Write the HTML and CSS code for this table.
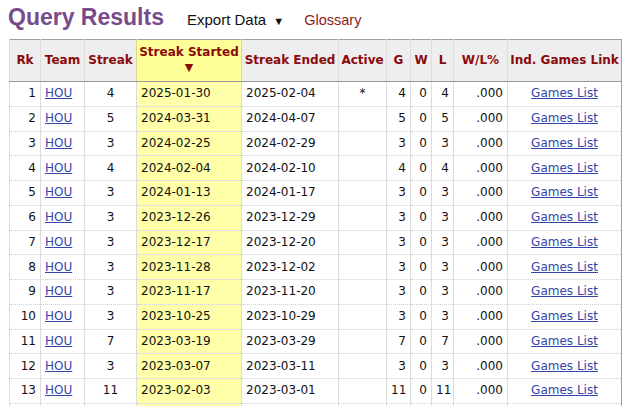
FILE: index.html
```html
<!DOCTYPE html>
<html>
<head>
<meta charset="utf-8">
<link rel="stylesheet" href="styles.css">
</head>
<body>
<div class="topbar">
  <h1 class="title">Query Results</h1>
  <span class="export">Export Data <span class="tri">▼</span></span>
  <a class="glossary">Glossary</a>
</div>
<table class="results">
  <colgroup>
    <col class="c-rk"><col class="c-team"><col class="c-streak"><col class="c-start"><col class="c-end"><col class="c-active"><col class="c-g"><col class="c-w"><col class="c-l"><col class="c-pct"><col class="c-link">
  </colgroup>
  <thead>
    <tr>
      <th>Rk</th><th>Team</th><th>Streak</th><th class="sorted">Streak Started<br><span class="arrow">▼</span></th><th>Streak Ended</th><th>Active</th><th>G</th><th>W</th><th>L</th><th>W/L%</th><th>Ind. Games Link</th>
    </tr>
  </thead>
  <tbody>
    <tr><td class="r">1</td><td><a>HOU</a></td><td class="c">4</td><td class="hl">2025-01-30</td><td>2025-02-04</td><td class="c">*</td><td class="r">4</td><td class="r">0</td><td class="r">4</td><td class="r">.000</td><td class="c"><a>Games List</a></td></tr>
    <tr><td class="r">2</td><td><a>HOU</a></td><td class="c">5</td><td class="hl">2024-03-31</td><td>2024-04-07</td><td class="c"></td><td class="r">5</td><td class="r">0</td><td class="r">5</td><td class="r">.000</td><td class="c"><a>Games List</a></td></tr>
    <tr><td class="r">3</td><td><a>HOU</a></td><td class="c">3</td><td class="hl">2024-02-25</td><td>2024-02-29</td><td class="c"></td><td class="r">3</td><td class="r">0</td><td class="r">3</td><td class="r">.000</td><td class="c"><a>Games List</a></td></tr>
    <tr><td class="r">4</td><td><a>HOU</a></td><td class="c">4</td><td class="hl">2024-02-04</td><td>2024-02-10</td><td class="c"></td><td class="r">4</td><td class="r">0</td><td class="r">4</td><td class="r">.000</td><td class="c"><a>Games List</a></td></tr>
    <tr><td class="r">5</td><td><a>HOU</a></td><td class="c">3</td><td class="hl">2024-01-13</td><td>2024-01-17</td><td class="c"></td><td class="r">3</td><td class="r">0</td><td class="r">3</td><td class="r">.000</td><td class="c"><a>Games List</a></td></tr>
    <tr><td class="r">6</td><td><a>HOU</a></td><td class="c">3</td><td class="hl">2023-12-26</td><td>2023-12-29</td><td class="c"></td><td class="r">3</td><td class="r">0</td><td class="r">3</td><td class="r">.000</td><td class="c"><a>Games List</a></td></tr>
    <tr><td class="r">7</td><td><a>HOU</a></td><td class="c">3</td><td class="hl">2023-12-17</td><td>2023-12-20</td><td class="c"></td><td class="r">3</td><td class="r">0</td><td class="r">3</td><td class="r">.000</td><td class="c"><a>Games List</a></td></tr>
    <tr><td class="r">8</td><td><a>HOU</a></td><td class="c">3</td><td class="hl">2023-11-28</td><td>2023-12-02</td><td class="c"></td><td class="r">3</td><td class="r">0</td><td class="r">3</td><td class="r">.000</td><td class="c"><a>Games List</a></td></tr>
    <tr><td class="r">9</td><td><a>HOU</a></td><td class="c">3</td><td class="hl">2023-11-17</td><td>2023-11-20</td><td class="c"></td><td class="r">3</td><td class="r">0</td><td class="r">3</td><td class="r">.000</td><td class="c"><a>Games List</a></td></tr>
    <tr><td class="r">10</td><td><a>HOU</a></td><td class="c">3</td><td class="hl">2023-10-25</td><td>2023-10-29</td><td class="c"></td><td class="r">3</td><td class="r">0</td><td class="r">3</td><td class="r">.000</td><td class="c"><a>Games List</a></td></tr>
    <tr><td class="r">11</td><td><a>HOU</a></td><td class="c">7</td><td class="hl">2023-03-19</td><td>2023-03-29</td><td class="c"></td><td class="r">7</td><td class="r">0</td><td class="r">7</td><td class="r">.000</td><td class="c"><a>Games List</a></td></tr>
    <tr><td class="r">12</td><td><a>HOU</a></td><td class="c">3</td><td class="hl">2023-03-07</td><td>2023-03-11</td><td class="c"></td><td class="r">3</td><td class="r">0</td><td class="r">3</td><td class="r">.000</td><td class="c"><a>Games List</a></td></tr>
    <tr><td class="r">13</td><td><a>HOU</a></td><td class="c">11</td><td class="hl">2023-02-03</td><td>2023-03-01</td><td class="c"></td><td class="r">11</td><td class="r">0</td><td class="r">11</td><td class="r">.000</td><td class="c"><a>Games List</a></td></tr>
    <tr class="spacer"><td></td><td></td><td></td><td class="hl"></td><td></td><td></td><td></td><td></td><td></td><td></td><td></td></tr>
  </tbody>
</table>
</body>
</html>
```

FILE: styles.css
```css
html, body {
  margin: 0;
  padding: 0;
  background: #fff;
}
body {
  padding: 0 0 0 8px;
  font-family: "DejaVu Sans", Verdana, sans-serif;
  overflow: hidden;
}
.topbar {
  display: flex;
  align-items: baseline;
  height: 39px;
  padding-top: 2px;
  box-sizing: border-box;
}
.title {
  margin: 0;
  font-family: "Liberation Sans", Arial, sans-serif;
  font-weight: bold;
  font-size: 23px;
  color: #774b8c;
  line-height: 30px;
}
.export {
  margin-left: 23px;
  font-family: "Liberation Sans", Arial, sans-serif;
  font-size: 15px;
  color: #111;
}
.export .tri {
  font-size: 11px;
  margin-left: 3px;
}
.glossary {
  margin-left: 20px;
  font-family: "Liberation Sans", Arial, sans-serif;
  font-size: 14.5px;
  color: #8a1c1c;
}
.results {
  margin-left: 1px;
  border-collapse: collapse;
  table-layout: fixed;
  width: 612px;
  border: 1px solid #a0a0a0;
  font-size: 12px;
  color: #111;
}
.c-rk { width: 31px; }
.c-team { width: 44px; }
.c-streak { width: 52px; }
.c-start { width: 105px; }
.c-end { width: 97px; }
.c-active { width: 48px; }
.c-g { width: 24px; }
.c-w { width: 21px; }
.c-l { width: 22px; }
.c-pct { width: 54px; }
.c-link { width: 114px; }
.results th {
  background: #eeeeee;
  color: #8b0a0a;
  font-weight: bold;
  font-size: 12px;
  height: 41px;
  padding: 0 2px;
  border-left: 1px solid #dcdcdc;
  border-bottom: 1px solid #999;
  white-space: nowrap;
  line-height: 15px;
  text-align: center;
  vertical-align: middle;
}
.results th.sorted {
  background: #ffff99;
  border-left: 1px solid #d8d889;
  border-right: 1px solid #d8d889;
  vertical-align: top;
  height: 36px;
  padding-top: 5px;
}
.results th .arrow {
  font-size: 11px;
}
.results td {
  height: 23.75px;
  padding: 0 4px;
  border-left: 1px solid #dcdcdc;
  border-bottom: 1px dotted #cfcfcf;
  white-space: nowrap;
  text-align: left;
  vertical-align: middle;
  line-height: 15px;
}
.results td.r { text-align: right; }
.results td.c { text-align: center; }
.results td.hl { background: #ffffaa; }
.results a {
  color: #3344aa;
  text-decoration: underline;
}
```
